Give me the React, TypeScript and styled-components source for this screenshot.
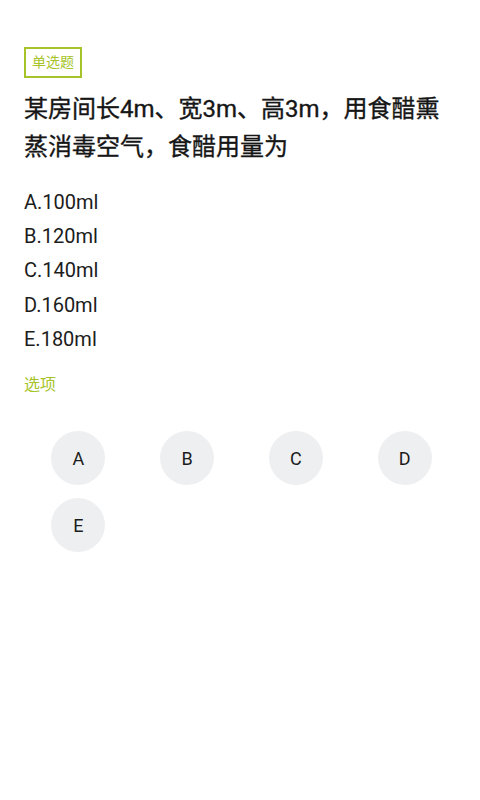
import React from "react";
import styled, { createGlobalStyle } from "styled-components";

const GlobalStyle = createGlobalStyle`
  html, body {
    margin: 0;
    padding: 0;
    background: #ffffff;
  }
  body {
    font-family: Roboto, "Noto Sans CJK SC", sans-serif;
    color: #1c1c1c;
  }
`;

const Page = styled.div`
  padding: 47px 21px 40px 24px;
  display: flex;
  flex-direction: column;
  align-items: flex-start;
`;

const Tag = styled.span`
  display: inline-block;
  box-sizing: border-box;
  height: 31px;
  padding: 0 6px;
  border: 2px solid #a6c42a;
  color: #a6c42a;
  font-size: 14px;
  line-height: 27px;
`;

const Title = styled.h1`
  margin: 12px 0 0;
  font-size: 24px;
  line-height: 38px;
  font-weight: 400;
  color: #161616;
  -webkit-text-stroke: 0.35px #161616;
`;

const OptionList = styled.ul`
  list-style: none;
  margin: 19px 0 0;
  padding: 0;
`;

const Option = styled.li`
  font-size: 20px;
  line-height: 34.2px;
  color: #1c1c1c;
`;

const SectionLabel = styled.div`
  margin-top: 18px;
  font-size: 16px;
  line-height: 22px;
  color: #a6c42a;
`;

const ChoiceGrid = styled.div`
  margin-top: 35px;
  align-self: stretch;
  display: grid;
  grid-template-columns: repeat(4, 1fr);
  row-gap: 13px;
`;

const Choice = styled.button`
  justify-self: center;
  width: 54px;
  height: 54px;
  border-radius: 50%;
  border: none;
  background: #eeeff1;
  color: #1c1c1c;
  font-family: Roboto, sans-serif;
  font-size: 18px;
  padding: 0;
  display: flex;
  align-items: center;
  justify-content: center;
`;

const options = ["A.100ml", "B.120ml", "C.140ml", "D.160ml", "E.180ml"];
const letters = ["A", "B", "C", "D", "E"];

export default function App() {
  return (
    <>
      <GlobalStyle />
      <Page>
        <Tag>单选题</Tag>
        <Title>某房间长4m、宽3m、高3m，用食醋熏蒸消毒空气，食醋用量为</Title>
        <OptionList>
          {options.map((o) => (
            <Option key={o}>{o}</Option>
          ))}
        </OptionList>
        <SectionLabel>选项</SectionLabel>
        <ChoiceGrid>
          {letters.map((l) => (
            <Choice key={l}>{l}</Choice>
          ))}
        </ChoiceGrid>
      </Page>
    </>
  );
}
